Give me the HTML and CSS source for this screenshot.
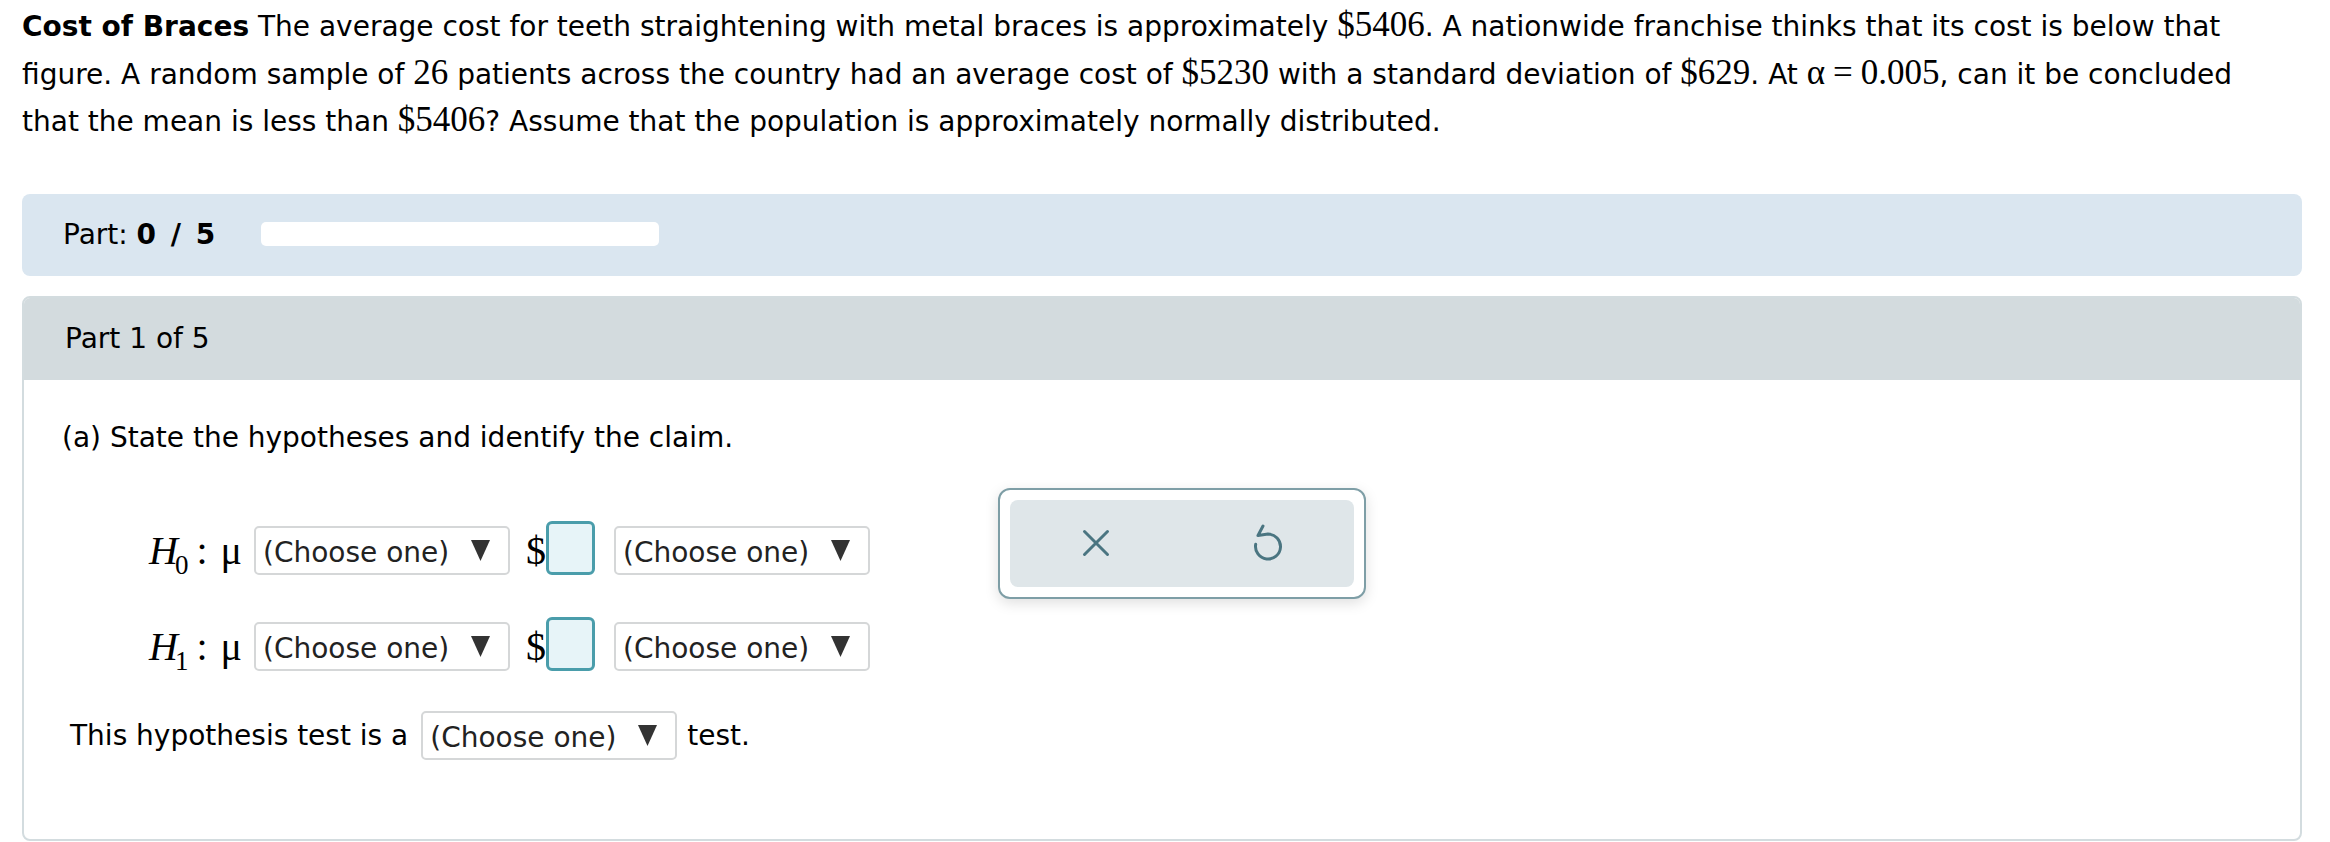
FILE: index.html
```html
<!DOCTYPE html>
<html>
<head>
<meta charset="utf-8">
<link rel="stylesheet" href="styles.css">
</head>
<body>
<div class="page">
  <p class="problem"><b>Cost of Braces</b> The average cost for teeth straightening with metal braces is approximately <span class="m">$5406</span>. A nationwide franchise thinks that its cost is below that figure. A random sample of <span class="m">26</span> patients across the country had an average cost of <span class="m">$5230</span> with a standard deviation of <span class="m">$629</span>. At <span class="m">α<span class="eq">=</span>0.005</span>, can it be concluded that the mean is less than <span class="m">$5406</span>? Assume that the population is approximately normally distributed.</p>

  <div class="partbar">
    <span class="partlabel">Part: <b>0 / 5</b></span>
    <div class="progress"></div>
  </div>

  <div class="card">
    <div class="card-head">Part 1 of 5</div>
    <div class="card-body">
      <p class="q">(a) State the hypotheses and identify the claim.</p>
      <div class="work">
        <div class="hyps">
          <div class="hrow">
            <span class="hmath"><i class="hv">H</i><span class="sub">0</span><span class="colon">:</span><span class="mu">μ</span></span>
            <span class="sel"><span>(Choose one)</span><svg class="arr" width="19" height="21" viewBox="0 0 19 21"><polygon points="0,0 19,0 9.5,21" fill="#333"/></svg></span>
            <span class="dollar">$</span><span class="inp"></span>
            <span class="sel sel2"><span>(Choose one)</span><svg class="arr" width="19" height="21" viewBox="0 0 19 21"><polygon points="0,0 19,0 9.5,21" fill="#333"/></svg></span>
          </div>
          <div class="hrow hrow2">
            <span class="hmath"><i class="hv">H</i><span class="sub">1</span><span class="colon">:</span><span class="mu">μ</span></span>
            <span class="sel"><span>(Choose one)</span><svg class="arr" width="19" height="21" viewBox="0 0 19 21"><polygon points="0,0 19,0 9.5,21" fill="#333"/></svg></span>
            <span class="dollar">$</span><span class="inp"></span>
            <span class="sel sel2"><span>(Choose one)</span><svg class="arr" width="19" height="21" viewBox="0 0 19 21"><polygon points="0,0 19,0 9.5,21" fill="#333"/></svg></span>
          </div>
        </div>
        <div class="toolbox">
          <div class="tools">
            <span class="tool"><svg width="30" height="30" viewBox="0 0 30 30"><path d="M3.5 3.5 L26.5 26.5 M26.5 3.5 L3.5 26.5" stroke="#4a7581" stroke-width="3" stroke-linecap="round" fill="none"/></svg></span>
            <span class="tool"><svg width="32" height="40" viewBox="0 0 32 40"><path d="M11 3 L6 12.5 L16 11 A12.5 12.5 0 1 1 3.7 21.3" stroke="#4a7581" stroke-width="3" stroke-linecap="round" stroke-linejoin="round" fill="none"/></svg></span>
          </div>
        </div>
      </div>
      <div class="testline">
        <span>This hypothesis test is a</span>
        <span class="sel sel3"><span>(Choose one)</span><svg class="arr" width="19" height="21" viewBox="0 0 19 21"><polygon points="0,0 19,0 9.5,21" fill="#333"/></svg></span>
        <span>test.</span>
      </div>
    </div>
  </div>
</div>
</body>
</html>
```

FILE: styles.css
```css
* { box-sizing: border-box; }
body {
  margin: 0;
  font-family: "DejaVu Sans", Verdana, sans-serif;
  font-size: 28px;
  color: #000;
  background: #fff;
}
.page { padding: 3px 28px 0 22px; }
.problem { margin: 0 0 48px; padding-right: 30px; line-height: 47.5px; }
.m { font-family: "Liberation Serif", "Times New Roman", serif; font-size: 35px; line-height: 1; }
.eq { margin: 0 8px; }

.partbar {
  display: flex;
  align-items: center;
  height: 82px;
  background: #dae6f0;
  border-radius: 8px;
  padding-left: 41px;
}
.partlabel b { letter-spacing: 2.5px; }
.progress {
  width: 398px;
  height: 24px;
  background: #fff;
  border-radius: 5px;
  margin-left: 43px;
  margin-top: -2px;
}

.card {
  margin-top: 20px;
  border: 2px solid #d3dcdf;
  border-radius: 8px;
  overflow: hidden;
}
.card-head {
  height: 82px;
  background: #d3dbde;
  display: flex;
  align-items: center;
  padding-left: 41px;
}
.card-body { padding: 34px 0 71px 38px; }
.q { margin: 0; line-height: 48px; }
.work { display: flex; align-items: flex-start; margin-top: 26px; }
.hyps { margin-left: 87px; padding-top: 31px; }
.hrow { display: flex; align-items: center; height: 64px; }
.hrow2 { margin-top: 32px; }
.hmath { display: flex; align-items: baseline; font-family: "Liberation Serif", "Times New Roman", serif; font-size: 40px; width: 105px; }
.hv { font-style: italic; }
.sub { font-size: 27px; margin-left: -3px; position: relative; top: 10px; }
.colon { margin-left: 8px; }
.mu { margin-left: 13px; }
.sel {
  display: inline-flex;
  align-items: center;
  justify-content: space-between;
  width: 256px;
  height: 49px;
  border: 2px solid #d5d7d8;
  border-radius: 5px;
  padding: 4px 18px 0 7px;
  color: #222;
  background: #fff;
}
.arr { margin-top: -4px; }
.dollar { font-family: "Liberation Serif", "Times New Roman", serif; font-size: 40px; margin-left: 16px; }
.inp {
  width: 49px;
  height: 54px;
  border: 3px solid #4a9dab;
  border-radius: 6px;
  background: #e7f4f8;
  margin-top: -6px;
}
.sel2 { margin-left: 19px; }

.toolbox {
  margin-left: 128px;
  width: 368px;
  height: 111px;
  border: 2px solid #7e9ea6;
  border-radius: 12px;
  background: #fff;
  padding: 10px;
  box-shadow: 0 4px 14px rgba(0, 0, 0, 0.13);
}
.tools {
  display: flex;
  height: 100%;
  background: #dfe6e9;
  border-radius: 8px;
}
.tool { flex: 1; display: flex; align-items: center; justify-content: center; }

.testline { display: flex; align-items: center; height: 64px; margin-top: 25px; margin-left: 8px; }
.sel3 { margin: 0 10px 0 13px; }
```
